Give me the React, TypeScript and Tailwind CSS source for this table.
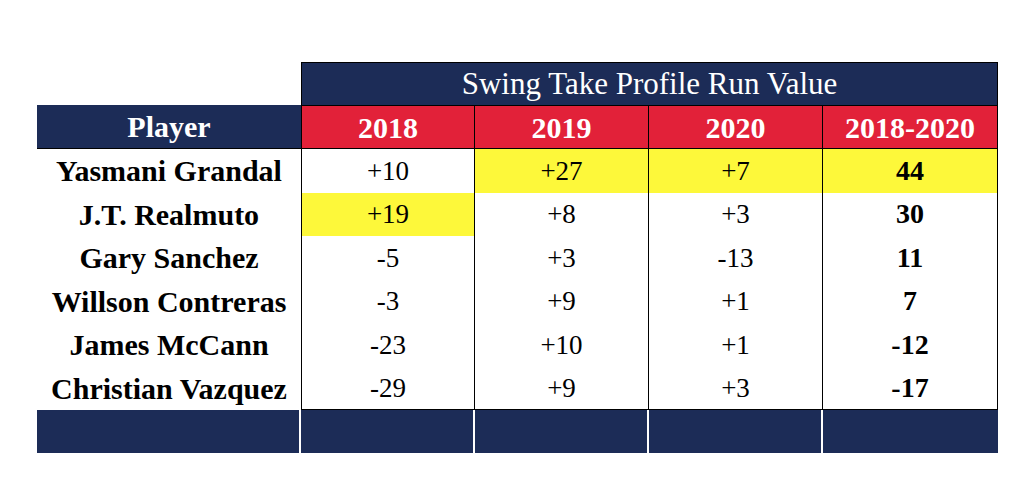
const rows = [
  { name: 'Yasmani Grandal', v: ['+10', '+27', '+7', '44'], hi: [false, true, true, true] },
  { name: 'J.T. Realmuto', v: ['+19', '+8', '+3', '30'], hi: [true, false, false, false] },
  { name: 'Gary Sanchez', v: ['-5', '+3', '-13', '11'], hi: [false, false, false, false] },
  { name: 'Willson Contreras', v: ['-3', '+9', '+1', '7'], hi: [false, false, false, false] },
  { name: 'James McCann', v: ['-23', '+10', '+1', '-12'], hi: [false, false, false, false] },
  { name: 'Christian Vazquez', v: ['-29', '+9', '+3', '-17'], hi: [false, false, false, false] },
];

const years = ['2018', '2019', '2020', '2018-2020'];

export default function App() {
  return (
    <div className="w-[1024px] h-[479px] bg-white pl-[37px] pt-[62px] font-['Liberation_Serif',serif] text-[27px] text-black">
      <div className="grid grid-cols-[264px_174px_174px_174px_175px]">
        {/* title row */}
        <div />
        <div className="col-span-4 h-[43px] bg-[#1c2c57] border border-b-0 border-black text-white text-[31px] flex items-center justify-center">
          Swing Take Profile Run Value
        </div>

        {/* header row */}
        <div className="h-[44px] bg-[#1c2c57] text-white text-[30px] font-bold flex items-center justify-center border-b border-black">
          Player
        </div>
        {years.map((y, i) => (
          <div
            key={y}
            className={`h-[44px] bg-[#e22139] text-white text-[30px] font-bold flex items-center justify-center border-t border-b border-r border-black ${
              i === 0 ? 'border-l' : ''
            }`}
          >
            {y}
          </div>
        ))}

        {/* data rows */}
        {rows.map((r, ri) => (
          <div key={r.name} className="contents">
            <div className="h-[43.5px] flex items-center justify-center font-bold text-[30px]">{r.name}</div>
            {r.v.map((val, ci) => (
              <div
                key={ci}
                className={`h-[43.5px] flex items-center justify-center border-r border-black ${
                  ci === 0 ? 'border-l' : ''
                } ${ri === rows.length - 1 ? 'border-b' : ''} ${r.hi[ci] ? 'bg-[#fdf83a]' : 'bg-white'} ${
                  ci === 3 ? 'font-bold text-[28px]' : ''
                }`}
              >
                {val}
              </div>
            ))}
          </div>
        ))}

        {/* footer row */}
        {[0, 1, 2, 3, 4].map((i) => (
          <div
            key={i}
            className={`h-[43px] bg-[#1c2c57] ${i < 4 ? 'border-r-2 border-white' : ''}`}
          />
        ))}
      </div>
    </div>
  );
}
